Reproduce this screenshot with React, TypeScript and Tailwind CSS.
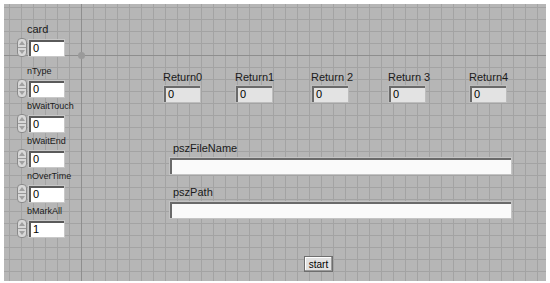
import React from "react";

const font = { fontFamily: '"Liberation Sans", Arial, sans-serif' };

function Spinner() {
  return (
    <div className="flex h-[19px] w-[10px] flex-col overflow-hidden rounded-[4px] border border-[#8a8a8a] bg-[#d8d8d8]">
      <div className="flex flex-1 items-center justify-center border-b border-[#9a9a9a]">
        <svg viewBox="0 0 6 4" className="h-[4px] w-[6px]" aria-hidden>
          <path d="M0 4 L3 0 L6 4 Z" fill="#a0a0a0" />
        </svg>
      </div>
      <div className="flex flex-1 items-center justify-center">
        <svg viewBox="0 0 6 4" className="h-[4px] w-[6px]" aria-hidden>
          <path d="M0 0 L3 4 L6 0 Z" fill="#a0a0a0" />
        </svg>
      </div>
    </div>
  );
}

function NumControl({ label, value, small }: { label: string; value: string; small?: boolean }) {
  return (
    <div className="flex flex-col">
      <span
        className={
          small
            ? "ml-[10px] h-[12px] text-[9px] leading-[12px] text-[#1a1a1a]"
            : "ml-[10px] h-[14px] text-[11px] leading-[14px] text-[#1a1a1a]"
        }
      >
        {label}
      </span>
      <div className="mt-[2px] flex items-center gap-[1px]">
        <Spinner />
        <div className="h-[18px] w-[37px] border border-[#c8c8c8] bg-[#c8c8c8]">
          <div className="h-full w-full border-l-2 border-t-2 border-[#5a5a5a] bg-white pl-[2px] text-[11px] leading-[13px] text-black">
            {value}
          </div>
        </div>
      </div>
    </div>
  );
}

function Indicator({ label }: { label: string }) {
  return (
    <div className="flex flex-col">
      <span className="h-[14px] text-[11px] leading-[14px] text-[#1a1a1a]">{label}</span>
      <div className="mt-[1px] h-[18px] w-[38px] border border-[#bdbdbd] bg-[#bdbdbd]">
        <div className="h-full w-full border-l-2 border-t-2 border-[#6a6a6a] bg-[#e3e3e3] pl-[2px] text-[11px] leading-[13px] text-black">
          0
        </div>
      </div>
    </div>
  );
}

function StringBox({ label }: { label: string }) {
  return (
    <div className="ml-[6px] flex flex-col">
      <span className="ml-[4px] h-[14px] text-[11px] leading-[14px] text-[#1a1a1a]">{label}</span>
      <div className="mt-[2px] h-[18px] w-[343px] border border-[#c4c4c4] bg-[#c4c4c4]">
        <div className="h-full w-full border-l-2 border-t-2 border-[#6a6a6a] bg-[#fafafa]" />
      </div>
    </div>
  );
}

export default function App() {
  return (
    <div className="h-[283px] w-[550px] bg-white pl-[4px] pt-[4px]" style={font}>
      <div className="relative flex h-[277px] w-[542px] overflow-hidden bg-[#b6b6b6] bg-[linear-gradient(to_right,#a3a3a3_1px,transparent_1px),linear-gradient(to_bottom,#a3a3a3_1px,transparent_1px)] bg-[size:12px_12px] bg-[position:5px_3px] pl-[13px] pt-[18px]">
        {/* origin axes of the panel */}
        <div className="absolute bottom-0 left-[77px] top-0 w-px bg-[#8e8e8e]" />
        <div className="absolute left-0 right-0 top-[51px] h-px bg-[#8e8e8e]" />
        <div className="absolute left-[74px] top-[48px] h-[7px] w-[7px] rounded-full bg-[#9a9a9a]" />

        {/* inputs column */}
        <div className="relative flex w-[146px] flex-col gap-[2px]">
          <div className="mb-[6px]">
            <NumControl label="card" value="0" />
          </div>
          <NumControl label="nType" value="0" small />
          <NumControl label="bWaitTouch" value="0" small />
          <NumControl label="bWaitEnd" value="0" small />
          <NumControl label="nOverTime" value="0" small />
          <NumControl label="bMarkAll" value="1" small />
        </div>

        {/* outputs */}
        <div className="relative flex flex-col pt-[48px]">
          <div className="grid grid-cols-[72px_76px_77px_81px_auto]">
            <Indicator label="Return0" />
            <Indicator label="Return1" />
            <Indicator label="Return 2" />
            <Indicator label="Return 3" />
            <Indicator label="Return4" />
          </div>
          <div className="mt-[38px] flex flex-col gap-[10px]">
            <StringBox label="pszFileName" />
            <StringBox label="pszPath" />
          </div>
          <button className="ml-[141px] mt-[37px] h-[16px] w-[29px] border border-[#6e6e6e] bg-[#e2e2e2] text-[10px] leading-[13px] text-black shadow-[inset_-1px_-1px_0_#9a9a9a,inset_1px_1px_0_#fff]">
            start
          </button>
        </div>
      </div>
    </div>
  );
}
